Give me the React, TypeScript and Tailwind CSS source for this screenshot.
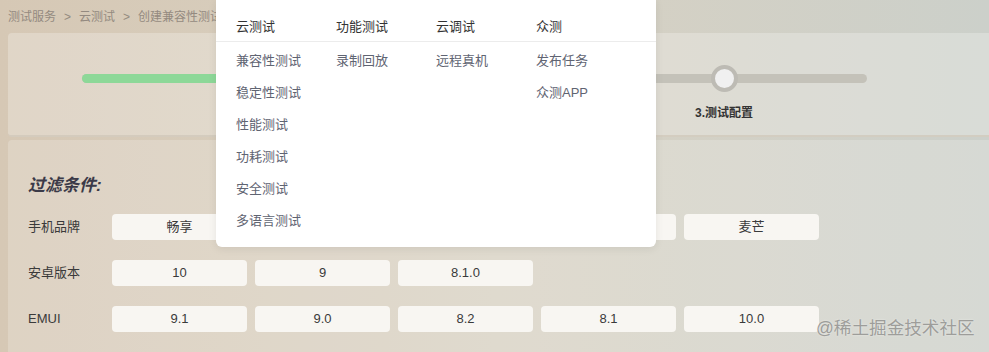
import React from "react";

const menu = [
  { title: "云测试", items: ["兼容性测试", "稳定性测试", "性能测试", "功耗测试", "安全测试", "多语言测试"] },
  { title: "功能测试", items: ["录制回放"] },
  { title: "云调试", items: ["远程真机"] },
  { title: "众测", items: ["发布任务", "众测APP"] },
];

const rows = [
  { label: "手机品牌", values: ["畅享", "nova", "Mate", "P", "麦芒"] },
  { label: "安卓版本", values: ["10", "9", "8.1.0"] },
  { label: "EMUI", values: ["9.1", "9.0", "8.2", "8.1", "10.0"] },
];

const App = () => {
  return (
    <section
      className="relative w-full h-[352px] overflow-hidden bg-gradient-to-r from-[#d6c8b5] via-[#d8d1c2] to-[#ccd0ca] pl-[8px]"
      style={{ fontFamily: '"Liberation Sans", "Noto Sans CJK SC", sans-serif' }}
    >
      {/* breadcrumb */}
      <div className="h-[33px] flex items-center text-[12px] text-[#948a80] gap-[8px]">
        <span>测试服务</span>
        <span>&gt;</span>
        <span>云测试</span>
        <span>&gt;</span>
        <span>创建兼容性测试</span>
      </div>

      {/* stepper card */}
      <div className="h-[104px] rounded-l-[4px] bg-white/25 border-b-[2px] border-[#cfc6b8]/70 pt-[41px]">
        <div className="relative ml-[74px] w-[785px] h-[9px] rounded-full bg-[#c4c2b9]">
          <div className="h-full w-[380px] rounded-full bg-[#8dd898]" />
          <div className="absolute left-[629px] top-[-9px] w-[27px] h-[27px] rounded-full border-[4px] border-[#bdbbb4] bg-[#f0f0f0]" />
          <div className="absolute left-[607px] top-[30px] w-[70px] text-center text-[12px] font-bold text-[#333]">
            3.测试配置
          </div>
        </div>
      </div>

      {/* filter card */}
      <div className="mt-[3px] h-[220px] rounded-l-[4px] bg-white/20 pl-[20px] pt-[34px]">
        <h2 className="text-[17px] leading-[24px] font-bold italic text-[#3b3a48]">过滤条件:</h2>
        <div className="mt-[16px] flex flex-col gap-[20px]">
          {rows.map((row) => (
            <div key={row.label} className="flex items-center h-[26px]">
              <span className="w-[84px] text-[13px] text-[#3a3a3a]">{row.label}</span>
              <div className="flex gap-[8px]">
                {row.values.map((v) => (
                  <div
                    key={v}
                    className="w-[135px] h-[26px] rounded-[4px] bg-[#f8f6f2] flex items-center justify-center text-[13px] text-[#3a3a3a]"
                  >
                    {v}
                  </div>
                ))}
              </div>
            </div>
          ))}
        </div>
      </div>

      {/* dropdown menu */}
      <div className="absolute left-[216px] top-0 w-[440px] h-[247px] bg-white rounded-b-[6px] shadow-[0_2px_8px_rgba(0,0,0,0.08)]">
        <div className="flex h-[42px] border-b border-[#ececec]">
          {menu.map((col) => (
            <div key={col.title} className="w-[100px] pl-[20px] pt-[18px] text-[13px] leading-[18px] text-[#333]">
              {col.title}
            </div>
          ))}
        </div>
        <div className="flex pt-[9px]">
          {menu.map((col) => (
            <div key={col.title} className="w-[100px] pl-[20px] flex flex-col">
              {col.items.map((it) => (
                <div key={it} className="h-[32px] leading-[20px] text-[13px] text-[#5f6472]">
                  {it}
                </div>
              ))}
            </div>
          ))}
        </div>
      </div>

      {/* watermark */}
      <div className="absolute left-[816px] top-[317px] text-[17.6px] leading-[22px] text-[#9d9d9a] [text-shadow:0_0_2px_rgba(255,255,255,0.6)]">
        @稀土掘金技术社区
      </div>
    </section>
  );
};

export default App;
